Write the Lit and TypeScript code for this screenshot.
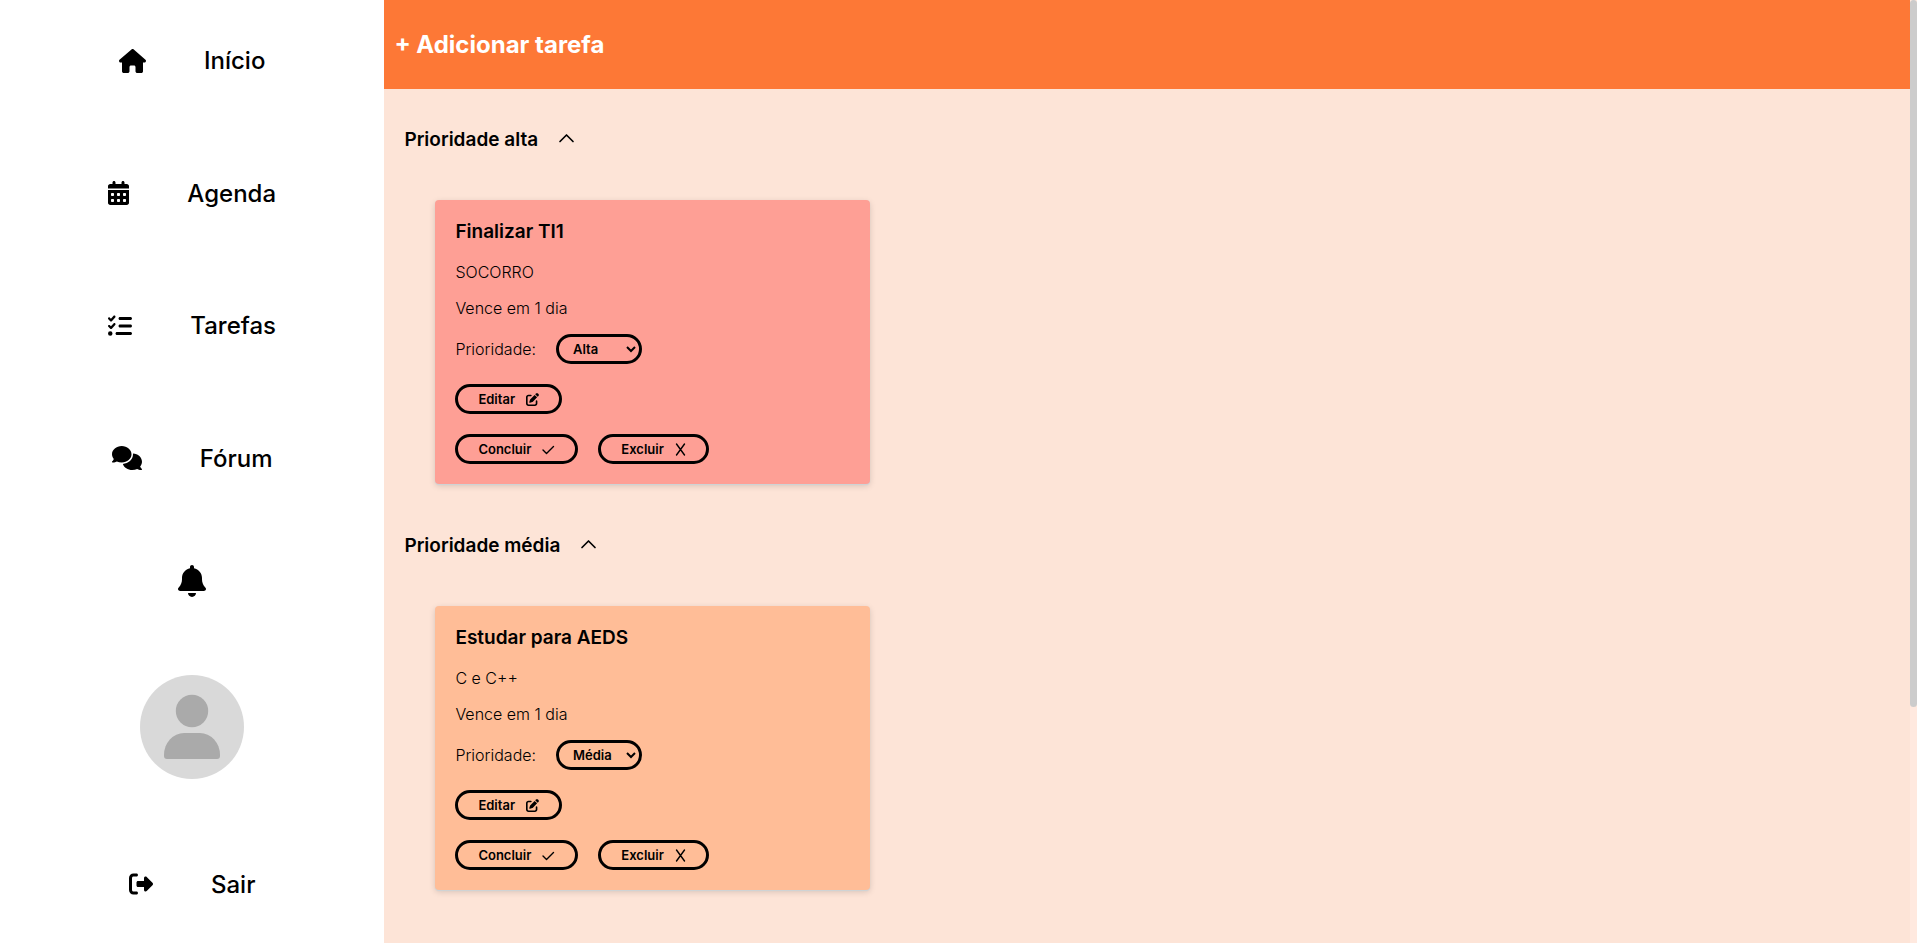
import { LitElement, html, css, svg, nothing } from "lit";
import { customElement, property, state } from "lit/decorators.js";
import { classMap } from "lit/directives/class-map.js";

interface Icon {
  width: number;
  height: number;
  path: string;
}

const icons: Record<string, Icon> = {
  house: {
    width: 576,
    height: 512,
    path: "M575.8 255.5c0 18-15 32.1-32 32.1l-32 0 .7 160.200c0 2.700-.2 5.400-.5 8.100l0 16.200c0 22.100-17.900 40-40 40l-16 0c-1.100 0-2.200 0-3.300-.1c-1.400 .1-2.800 .1-4.200 .1L416 512l-24 0c-22.100 0-40-17.900-40-40l0-24 0-64c0-17.700-14.300-32-32-32l-64 0c-17.700 0-32 14.300-32 32l0 64 0 24c0 22.100-17.900 40-40 40l-24 0-31.900 0c-1.500 0-3-.1-4.500-.2c-1.200 .1-2.400 .2-3.600 .2l-16 0c-22.100 0-40-17.900-40-40l0-112c0-.9 0-1.900 .1-2.800l0-69.700-32 0c-18 0-32-14-32-32.100c0-9 3-17 10-24L266.400 8c7-7 15-8 22-8s15 2 21 7L564.800 231.500c8 7 12 15 11 24z",
  },
  calendar: {
    width: 448,
    height: 512,
    path: "M128 0c17.700 0 32 14.300 32 32l0 32 128 0 0-32c0-17.700 14.300-32 32-32s32 14.300 32 32l0 32 48 0c26.500 0 48 21.500 48 48l0 48L0 160l0-48C0 85.500 21.500 64 48 64l48 0 0-32c0-17.700 14.300-32 32-32zM0 192l448 0 0 272c0 26.500-21.500 48-48 48L48 512c-26.500 0-48-21.500-48-48L0 192zm64 80l0 32c0 8.800 7.200 16 16 16l32 0c8.800 0 16-7.200 16-16l0-32c0-8.800-7.200-16-16-16l-32 0c-8.800 0-16 7.200-16 16zm128 0l0 32c0 8.800 7.200 16 16 16l32 0c8.800 0 16-7.200 16-16l0-32c0-8.800-7.200-16-16-16l-32 0c-8.800 0-16 7.200-16 16zm144-16c-8.800 0-16 7.200-16 16l0 32c0 8.800 7.200 16 16 16l32 0c8.800 0 16-7.200 16-16l0-32c0-8.800-7.200-16-16-16l-32 0zM64 400l0 32c0 8.800 7.200 16 16 16l32 0c8.800 0 16-7.200 16-16l0-32c0-8.800-7.200-16-16-16l-32 0c-8.800 0-16 7.200-16 16zm144-16c-8.800 0-16 7.200-16 16l0 32c0 8.800 7.200 16 16 16l32 0c8.800 0 16-7.200 16-16l0-32c0-8.800-7.200-16-16-16l-32 0zm112 16l0 32c0 8.800 7.200 16 16 16l32 0c8.800 0 16-7.200 16-16l0-32c0-8.800-7.200-16-16-16l-32 0c-8.800 0-16 7.200-16 16z",
  },
  tasks: {
    width: 512,
    height: 512,
    path: "M152.100 38.200c9.900 8.900 10.700 24 1.800 33.900l-72 80c-4.400 4.900-10.600 7.800-17.200 7.900s-12.900-2.400-17.600-7L7 113C-2.300 103.600-2.300 88.400 7 79s24.600-9.400 33.900 0l22.100 22.100 55.100-61.200c8.900-9.900 24-10.700 33.900-1.800zm0 160c9.900 8.900 10.700 24 1.800 33.900l-72 80c-4.400 4.900-10.600 7.800-17.200 7.900s-12.900-2.400-17.600-7L7 273c-9.400-9.400-9.400-24.600 0-33.900s24.600-9.400 33.900 0l22.100 22.100 55.100-61.200c8.900-9.900 24-10.700 33.900-1.800zM224 96c0-17.700 14.300-32 32-32l224 0c17.700 0 32 14.300 32 32s-14.300 32-32 32l-224 0c-17.700 0-32-14.300-32-32zm0 160c0-17.700 14.300-32 32-32l224 0c17.700 0 32 14.300 32 32s-14.300 32-32 32l-224 0c-17.700 0-32-14.300-32-32zM160 416c0-17.700 14.300-32 32-32l288 0c17.700 0 32 14.300 32 32s-14.300 32-32 32l-288 0c-17.700 0-32-14.300-32-32zM48 368a48 48 0 1 1 0 96 48 48 0 1 1 0-96z",
  },
  comments: {
    width: 640,
    height: 512,
    path: "M208 352c114.900 0 208-78.800 208-176S322.900 0 208 0S0 78.800 0 176c0 38.600 14.700 74.300 39.600 103.400c-3.500 9.400-8.700 17.700-14.200 24.700c-4.800 6.200-9.700 11-13.300 14.300c-1.800 1.600-3.300 2.900-4.300 3.700c-.5 .4-.9 .7-1.100 .8l-.2 .2C1 327.200-1.400 334.400 .8 340.900S9.100 352 16 352c21.800 0 43.800-5.600 62.100-12.500c9.200-3.500 17.800-7.400 25.200-11.400C134.100 343.300 169.800 352 208 352zM448 176c0 112.300-99.100 196.900-216.500 207C255.800 457.400 336.400 512 432 512c38.200 0 73.900-8.700 104.700-23.900c7.500 4 16 7.900 25.200 11.400c18.300 6.900 40.300 12.500 62.100 12.500c6.900 0 13.100-4.500 15.200-11.100c2.100-6.600-.2-13.800-5.800-17.900l-.2-.2c-.2-.2-.6-.4-1.100-.8c-1-.8-2.500-2-4.300-3.700c-3.600-3.300-8.500-8.100-13.300-14.300c-5.500-7-10.700-15.400-14.200-24.700c24.900-29 39.600-64.700 39.600-103.400c0-92.800-84.900-168.900-192.600-175.500c.4 5.100 .6 10.300 .6 15.500z",
  },
  bell: {
    width: 448,
    height: 512,
    path: "M224 0c-17.700 0-32 14.300-32 32l0 19.200C119 66 64 130.600 64 208l0 18.800c0 47-17.300 92.400-48.500 127.600l-7.400 8.300c-8.400 9.400-10.400 22.900-5.300 34.400S19.400 416 32 416l384 0c12.600 0 24-7.400 29.200-18.900s3.100-25-5.300-34.400l-7.400-8.300C401.300 319.200 384 273.900 384 226.800l0-18.800c0-77.400-55-142-128-156.800L256 32c0-17.700-14.300-32-32-32zm45.300 493.300c12-12 18.700-28.300 18.700-45.300l-64 0-64 0c0 17 6.700 33.300 18.700 45.300s28.300 18.700 45.300 18.700s33.300-6.700 45.300-18.700z",
  },
  exit: {
    width: 512,
    height: 512,
    path: "M377.900 105.900L500.700 228.700c7.200 7.200 11.300 17.100 11.300 27.300s-4.100 20.100-11.300 27.300L377.900 406.100c-6.400 6.400-15 9.900-24 9.900c-18.700 0-33.900-15.200-33.900-33.900l0-62.100-128 0c-17.700 0-32-14.300-32-32l0-64c0-17.700 14.300-32 32-32l128 0 0-62.100c0-18.700 15.200-33.900 33.900-33.900c9 0 17.600 3.600 24 9.900zM160 96L96 96c-17.700 0-32 14.300-32 32l0 256c0 17.700 14.300 32 32 32l64 0c17.700 0 32 14.300 32 32s-14.300 32-32 32l-64 0c-53 0-96-43-96-96L0 128C0 75 43 32 96 32l64 0c17.700 0 32 14.300 32 32s-14.300 32-32 32z",
  },
  edit: {
    width: 512,
    height: 512,
    path: "M471.600 21.700c-21.900-21.900-57.300-21.900-79.200 0L362.300 51.700l97.900 97.900 30.100-30.100c21.900-21.900 21.900-57.300 0-79.200L471.600 21.700zm-299.200 220c-6.100 6.100-10.800 13.600-13.500 21.900l-29.600 88.800c-2.900 8.600-.6 18.100 5.800 24.600s15.900 8.700 24.600 5.800l88.800-29.600c8.200-2.700 15.700-7.400 21.900-13.500L437.700 172.300 339.700 74.300 172.400 241.700zM96 64C43 64 0 107 0 160L0 416c0 53 43 96 96 96l256 0c53 0 96-43 96-96l0-96c0-17.700-14.300-32-32-32s-32 14.300-32 32l0 96c0 17.700-14.300 32-32 32L96 448c-17.700 0-32-14.300-32-32l0-256c0-17.700 14.300-32 32-32l96 0c17.700 0 32-14.300 32-32s-14.300-32-32-32L96 64z",
  },
};

const filled = (name: string, size: number) => {
  const icon = icons[name];
  return html`<svg
    width=${Math.round((size * icon.width) / icon.height)}
    height=${size}
    viewBox="0 0 ${icon.width} ${icon.height}"
    fill="currentColor"
    aria-hidden="true"
  >
    ${svg`<path d=${icon.path}></path>`}
  </svg>`;
};

const stroked = (d: string, width: number, height: number, weight: number) => html`<svg
  width=${width}
  height=${height}
  viewBox="0 0 ${width} ${height}"
  fill="none"
  stroke="currentColor"
  stroke-width=${weight}
  stroke-linecap="round"
  stroke-linejoin="round"
  aria-hidden="true"
>
  ${svg`<path d=${d}></path>`}
</svg>`;

@customElement("side-nav")
export class SideNav extends LitElement {
  static styles = css`
    :host {
      display: block;
      background: #fff;
    }
    .nav {
      box-sizing: border-box;
      height: 100%;
      padding: 33px 0 31px;
      display: flex;
      flex-direction: column;
      align-items: center;
      justify-content: space-between;
    }
    .link {
      display: flex;
      align-items: center;
      gap: 58px;
      height: 55px;
      color: #000;
      font-size: 24px;
      font-weight: 500;
      text-decoration: none;
    }
    .bell {
      display: flex;
      padding: 1px;
      border: 0;
      background: none;
      color: #000;
    }
    .avatar {
      display: flex;
    }
  `;

  private link(icon: string, label: string) {
    return html`<a class="link" href="#">${filled(icon, 24)}<span>${label}</span></a>`;
  }

  render() {
    return html`<nav class="nav">
      ${this.link("house", "Início")} ${this.link("calendar", "Agenda")}
      ${this.link("tasks", "Tarefas")} ${this.link("comments", "Fórum")}
      <button class="bell" aria-label="Notificações">${filled("bell", 32)}</button>
      <a class="avatar" href="#" aria-label="Perfil">
        <svg width="104" height="104" viewBox="0 0 104 104" aria-hidden="true">
          <circle cx="52" cy="52" r="52" fill="#d9d9d9"></circle>
          <circle cx="52" cy="36" r="16.200" fill="#aaa"></circle>
          <path
            d="M24 80a20 22 0 0 1 20-22h16a20 22 0 0 1 20 22v1q0 3-3 3H27q-3 0-3-3z"
            fill="#aaa"
          ></path>
        </svg>
      </a>
      ${this.link("exit", "Sair")}
    </nav>`;
  }
}

interface Task {
  title: string;
  description: string;
  due: string;
  priority: string;
}

@customElement("task-card")
export class TaskCard extends LitElement {
  static styles = css`
    :host {
      display: block;
    }
    .card {
      display: flex;
      flex-direction: column;
      align-items: flex-start;
      padding: 20px;
      border-radius: 4px;
      box-shadow: 0 1px 1px #ccd4d8, 0 2px 6px rgba(0, 0, 0, 0.15);
      font-size: 16px;
      font-weight: 300;
      line-height: 20px;
    }
    .alta {
      background: #fe9f95;
    }
    .media {
      background: #ffbd97;
    }
    .title {
      margin: 0 0 18px;
      font-size: 19px;
      font-weight: 600;
      line-height: 24px;
    }
    .text {
      margin: 0 0 16px;
    }
    .row {
      display: flex;
      align-items: center;
      gap: 20px;
      margin-bottom: 20px;
    }
    .row:last-child {
      margin-bottom: 0;
    }
    .button,
    .select {
      box-sizing: border-box;
      height: 30px;
      border: 3px solid #000;
      border-radius: 15px;
      background: transparent;
      color: #000;
      font-family: inherit;
      font-size: 13px;
      font-weight: 600;
    }
    .button {
      display: flex;
      align-items: center;
      gap: 11px;
      padding: 0 20px;
    }
    .select {
      width: 86px;
      padding: 0 0 0 10px;
    }
  `;

  @property({ attribute: false }) task!: Task;

  render() {
    const { title, description, due, priority } = this.task;
    const tone = { card: true, alta: priority === "Alta", media: priority === "Média" };
    return html`<article class=${classMap(tone)}>
      <h4 class="title">${title}</h4>
      <p class="text">${description}</p>
      <p class="text">${due}</p>
      <div class="row">
        <label for="priority">Prioridade:</label>
        <select id="priority" class="select">
          ${["Alta", "Média", "Baixa"].map(
            (name) => html`<option ?selected=${name === priority}>${name}</option>`
          )}
        </select>
      </div>
      <div class="row">
        <button class="button">Editar ${filled("edit", 13)}</button>
      </div>
      <div class="row">
        <button class="button">Concluir ${stroked("M1 7L4.500 10.500L11.500 3.500", 13, 13, 1.4)}</button>
        <button class="button">Excluir ${stroked("M1.500 1L9.500 12M9.500 1L1.500 12", 11, 13, 1.4)}</button>
      </div>
    </article>`;
  }
}

@customElement("task-section")
export class TaskSection extends LitElement {
  static styles = css`
    :host {
      display: block;
    }
    .heading {
      margin: 0 0 48px;
      font-size: 19px;
      font-weight: 600;
      line-height: 24px;
    }
    .toggle {
      display: flex;
      align-items: center;
      gap: 20px;
      padding: 0;
      border: 0;
      background: none;
      color: #000;
      font: inherit;
    }
    .list {
      display: grid;
      grid-template-columns: repeat(3, minmax(0, 1fr));
      gap: 60px;
      padding: 0 31px;
    }
  `;

  @property() heading = "";
  @property({ attribute: false }) tasks: Task[] = [];
  @state() private open = true;

  render() {
    return html`<section>
      <h3 class="heading">
        <button class="toggle" @click=${() => (this.open = !this.open)}>
          ${this.heading} ${stroked("M2 9.500L8.500 3L15 9.500", 17, 16, 1.7)}
        </button>
      </h3>
      ${this.open
        ? html`<div class="list">
            ${this.tasks.map((task) => html`<task-card .task=${task}></task-card>`)}
          </div>`
        : nothing}
    </section>`;
  }
}

@customElement("app-root")
export class AppRoot extends LitElement {
  static styles = css`
    :host {
      display: grid;
      grid-template-columns: minmax(0, 1fr) minmax(0, 4fr) 7px;
      grid-template-columns: calc(20% + 1px) minmax(0, 1fr) 7px;
      height: 100vh;
      overflow: hidden;
      background: #fde4d7;
      color: #000;
      font-family: Inter, "Liberation Sans", sans-serif;
    }
    .main {
      overflow: hidden;
    }
    .header {
      display: flex;
      align-items: center;
      height: 89px;
      padding: 0 10px;
      background: #fd7836;
    }
    .add {
      padding: 0;
      border: 0;
      background: none;
      color: #fff;
      font-family: inherit;
      font-size: 24px;
      font-weight: 700;
    }
    .board {
      display: flex;
      flex-direction: column;
      gap: 50px;
      padding: 39px 20px;
    }
    .track {
      background: #ffe9df;
    }
    .thumb {
      height: 75%;
      border-radius: 4px;
      background: #ccc;
    }
  `;

  private high: Task[] = [
    { title: "Finalizar TI1", description: "SOCORRO", due: "Vence em 1 dia", priority: "Alta" },
  ];
  private medium: Task[] = [
    { title: "Estudar para AEDS", description: "C e C++", due: "Vence em 1 dia", priority: "Média" },
  ];

  render() {
    return html`
      <side-nav></side-nav>
      <main class="main">
        <header class="header"><button class="add">+ Adicionar tarefa</button></header>
        <div class="board">
          <task-section heading="Prioridade alta" .tasks=${this.high}></task-section>
          <task-section heading="Prioridade média" .tasks=${this.medium}></task-section>
        </div>
      </main>
      <div class="track"><div class="thumb"></div></div>
    `;
  }
}
